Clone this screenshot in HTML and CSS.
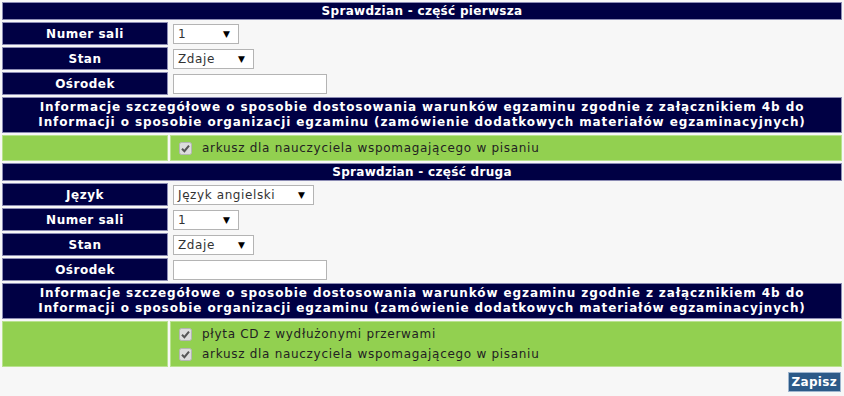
FILE: index.html
```html
<!DOCTYPE html>
<html lang="pl">
<head>
<meta charset="utf-8">
<title>Sprawdzian</title>
<link rel="stylesheet" href="styles.css">
</head>
<body>
<table class="form">
  <tr><th class="section" colspan="2">Sprawdzian - część pierwsza</th></tr>
  <tr>
    <td class="label">Numer sali</td>
    <td class="value"><span class="select w-sala"><span>1</span><span class="arrow">▼</span></span></td>
  </tr>
  <tr>
    <td class="label">Stan</td>
    <td class="value"><span class="select w-stan"><span>Zdaje</span><span class="arrow">▼</span></span></td>
  </tr>
  <tr>
    <td class="label">Ośrodek</td>
    <td class="value"><span class="input"></span></td>
  </tr>
  <tr><th class="info" colspan="2">Informacje szczegółowe o sposobie dostosowania warunków egzaminu zgodnie z załącznikiem 4b do<br>Informacji o sposobie organizacji egzaminu (zamówienie dodatkowych materiałów egzaminacyjnych)</th></tr>
  <tr class="green">
    <td class="gl"></td>
    <td class="gv">
      <div class="check"><svg class="cb" width="13" height="13" viewBox="0 0 13 13"><rect x="0.5" y="0.5" width="12" height="12" rx="2" fill="#dcdcdc" stroke="#b5b5b5"/><path d="M3 6.8 L5.4 9.2 L10 3.6" fill="none" stroke="#555" stroke-width="2"/></svg><span>arkusz dla nauczyciela wspomagającego w pisaniu</span></div>
    </td>
  </tr>
  <tr><th class="section" colspan="2">Sprawdzian - część druga</th></tr>
  <tr>
    <td class="label">Język</td>
    <td class="value"><span class="select w-jezyk"><span>Język angielski</span><span class="arrow">▼</span></span></td>
  </tr>
  <tr>
    <td class="label">Numer sali</td>
    <td class="value"><span class="select w-sala"><span>1</span><span class="arrow">▼</span></span></td>
  </tr>
  <tr>
    <td class="label">Stan</td>
    <td class="value"><span class="select w-stan"><span>Zdaje</span><span class="arrow">▼</span></span></td>
  </tr>
  <tr>
    <td class="label">Ośrodek</td>
    <td class="value"><span class="input"></span></td>
  </tr>
  <tr><th class="info" colspan="2">Informacje szczegółowe o sposobie dostosowania warunków egzaminu zgodnie z załącznikiem 4b do<br>Informacji o sposobie organizacji egzaminu (zamówienie dodatkowych materiałów egzaminacyjnych)</th></tr>
  <tr class="green">
    <td class="gl"></td>
    <td class="gv">
      <div class="check"><svg class="cb" width="13" height="13" viewBox="0 0 13 13"><rect x="0.5" y="0.5" width="12" height="12" rx="2" fill="#dcdcdc" stroke="#b5b5b5"/><path d="M3 6.8 L5.4 9.2 L10 3.6" fill="none" stroke="#555" stroke-width="2"/></svg><span>płyta CD z wydłużonymi przerwami</span></div>
      <div class="check"><svg class="cb" width="13" height="13" viewBox="0 0 13 13"><rect x="0.5" y="0.5" width="12" height="12" rx="2" fill="#dcdcdc" stroke="#b5b5b5"/><path d="M3 6.8 L5.4 9.2 L10 3.6" fill="none" stroke="#555" stroke-width="2"/></svg><span>arkusz dla nauczyciela wspomagającego w pisaniu</span></div>
    </td>
  </tr>
</table>
<div class="actions"><button class="btn" type="button">Zapisz</button></div>
</body>
</html>
```
FILE: styles.css
```css
html, body {
  margin: 0;
  padding: 0;
  background: #f7f7f7;
}
body {
  font-family: "DejaVu Sans", Verdana, sans-serif;
  font-size: 12px;
  color: #222;
}
.form {
  width: 100%;
  border-collapse: separate;
  border-spacing: 2px;
}
.form td, .form th {
  padding: 0;
}
.section {
  background: #000044;
  color: #fff;
  font-weight: bold;
  border: 1px solid #8c8cb4;
  height: 16px;
  line-height: 16px;
  text-align: center;
  letter-spacing: 0.3px;
}
.label {
  width: 164px;
  background: #000044;
  color: #fff;
  font-weight: bold;
  text-align: center;
  border: 1px solid #8c8cb4;
  height: 21px;
  letter-spacing: 0.5px;
}
.value {
  padding: 0 2px !important;
  height: 21px;
  border: 1px solid transparent;
}
.select {
  display: inline-flex;
  align-items: center;
  justify-content: space-between;
  box-sizing: border-box;
  height: 20px;
  border: 1px solid #b4b4b4;
  background: #fff;
  padding: 0 8px 0 4px;
  color: #333;
  vertical-align: middle;
  letter-spacing: 0.6px;
}
.arrow {
  font-size: 9px;
  color: #000;
  letter-spacing: 0;
}
.w-sala { width: 66px; }
.w-stan { width: 81px; }
.w-jezyk { width: 141px; }
.input {
  display: inline-block;
  box-sizing: border-box;
  width: 154px;
  height: 20px;
  border: 1px solid #b4b4b4;
  background: #fff;
  vertical-align: middle;
}
.info {
  background: #000044;
  color: #fff;
  font-weight: bold;
  text-align: center;
  border: 1px solid #8c8cb4;
  line-height: 15px;
  padding: 2px 0 !important;
  letter-spacing: 0.9px;
}
.green td {
  background: #92d050;
  border: 1px solid #b9e28f;
}
.gv {
  padding: 2px 0 !important;
}
.check {
  display: flex;
  align-items: center;
  height: 20px;
  padding-left: 8px;
  gap: 10px;
  color: #222;
  letter-spacing: 0.7px;
}
.cb {
  flex: none;
}
.actions {
  text-align: right;
  padding: 3px 3px 0 0;
}
.btn {
  font-family: "DejaVu Sans", Verdana, sans-serif;
  font-size: 12px;
  line-height: 14px;
  font-weight: bold;
  color: #fff;
  background: #2c5a88;
  border: 1px solid #9fb6cf;
  padding: 2px 3px;
  margin: 0;
  letter-spacing: 0.3px;
  cursor: pointer;
}
```
